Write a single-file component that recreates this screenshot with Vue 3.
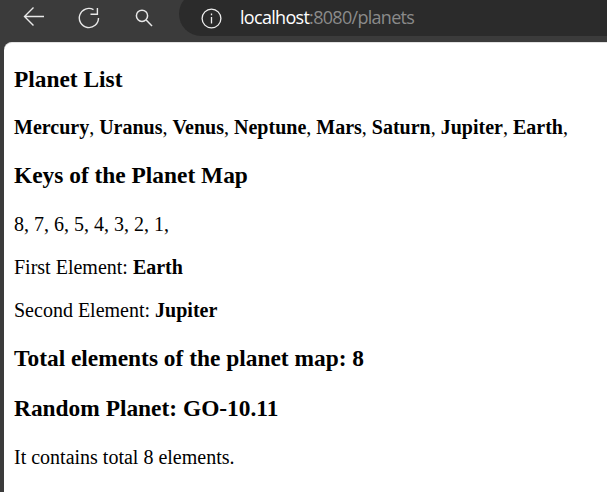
<script setup>
const planets = ['Mercury', 'Uranus', 'Venus', 'Neptune', 'Mars', 'Saturn', 'Jupiter', 'Earth']
const keys = [8, 7, 6, 5, 4, 3, 2, 1]
</script>

<template>
  <div class="window">
    <header class="toolbar">
      <svg class="icon back" width="22" height="22" viewBox="0 0 22 22" fill="none" stroke="#e8e8e8" stroke-width="1.4">
        <path d="M1.5 10.5H21M10.5 1.5L1.5 10.5L10.5 19.5" />
      </svg>
      <svg class="icon reload" width="22" height="22" viewBox="0 0 22 22" fill="none" stroke="#e8e8e8" stroke-width="1.4">
        <path d="M20.5 11A9.6 9.6 0 1 1 15.5 2.6" />
        <path d="M12.5 7.2H19.4V1" />
      </svg>
      <svg class="icon search" width="20" height="20" viewBox="0 0 20 20" fill="none" stroke="#e8e8e8" stroke-width="1.5">
        <circle cx="8" cy="7.8" r="5.6" />
        <path d="M12.2 12L18 18" />
      </svg>
      <div class="address">
        <svg class="info" width="21" height="21" viewBox="0 0 21 21" fill="none" stroke="#eeeeee" stroke-width="1.3">
          <circle cx="10.5" cy="10.5" r="9.4" />
          <path d="M10.5 9V15.5M10.5 5.6V7.2" />
        </svg>
        <span class="url"><span class="host">localhost</span>:8080/planets</span>
      </div>
    </header>
    <main class="page">
      <h3>Planet List</h3>
      <p>
        <template v-for="p in planets" :key="p"><b>{{ p }}</b>, </template>
      </p>
      <h3>Keys of the Planet Map</h3>
      <p><template v-for="k in keys" :key="k">{{ k }}, </template></p>
      <p>First Element: <b>Earth</b></p>
      <p>Second Element: <b>Jupiter</b></p>
      <h3>Total elements of the planet map: 8</h3>
      <h3>Random Planet: GO-10.11</h3>
      <p>It contains total 8 elements.</p>
    </main>
  </div>
</template>

<style>
html, body {
  margin: 0;
  background: #3b3b3b;
  overflow: hidden;
}
</style>

<style scoped>
.window {
  width: 607px;
  height: 492px;
  display: flex;
  flex-direction: column;
  overflow: hidden;
  background: #3b3b3b;
}
.toolbar {
  height: 42px;
  flex: none;
  display: flex;
  align-items: flex-start;
}
.icon { flex: none; }
.back { margin: 6px 0 0 23px; }
.reload { margin: 7px 0 0 33px; }
.search { margin: 8px 0 0 34px; }
.address {
  margin: -8px 0 0 25px;
  height: 44px;
  flex: 1;
  background: #2b2b2b;
  border-radius: 22px 0 0 22px;
  display: flex;
  align-items: center;
  padding: 8px 0 0 22px;
  box-sizing: border-box;
}
.url {
  margin: 0 0 2px 18px;
  font: 18px "Open Sans", sans-serif;
  letter-spacing: -0.7px;
  color: #8a8a8a;
}
.host { color: #ffffff; }
.page {
  flex: 1;
  margin-left: 4px;
  padding: 0 0 0 10px;
  background: #fff;
  border-top: 1px solid #e2e2e2;
  border-top-left-radius: 8px;
  color: #000;
  font: 20px "Liberation Serif", serif;
  white-space: nowrap;
  display: flow-root;
}
h3 {
  font-size: 23.4px;
  font-weight: bold;
  margin: 23.4px 0;
}
p { margin: 20px 0; }
h3:first-child { margin-top: 22.5px; }
</style>
